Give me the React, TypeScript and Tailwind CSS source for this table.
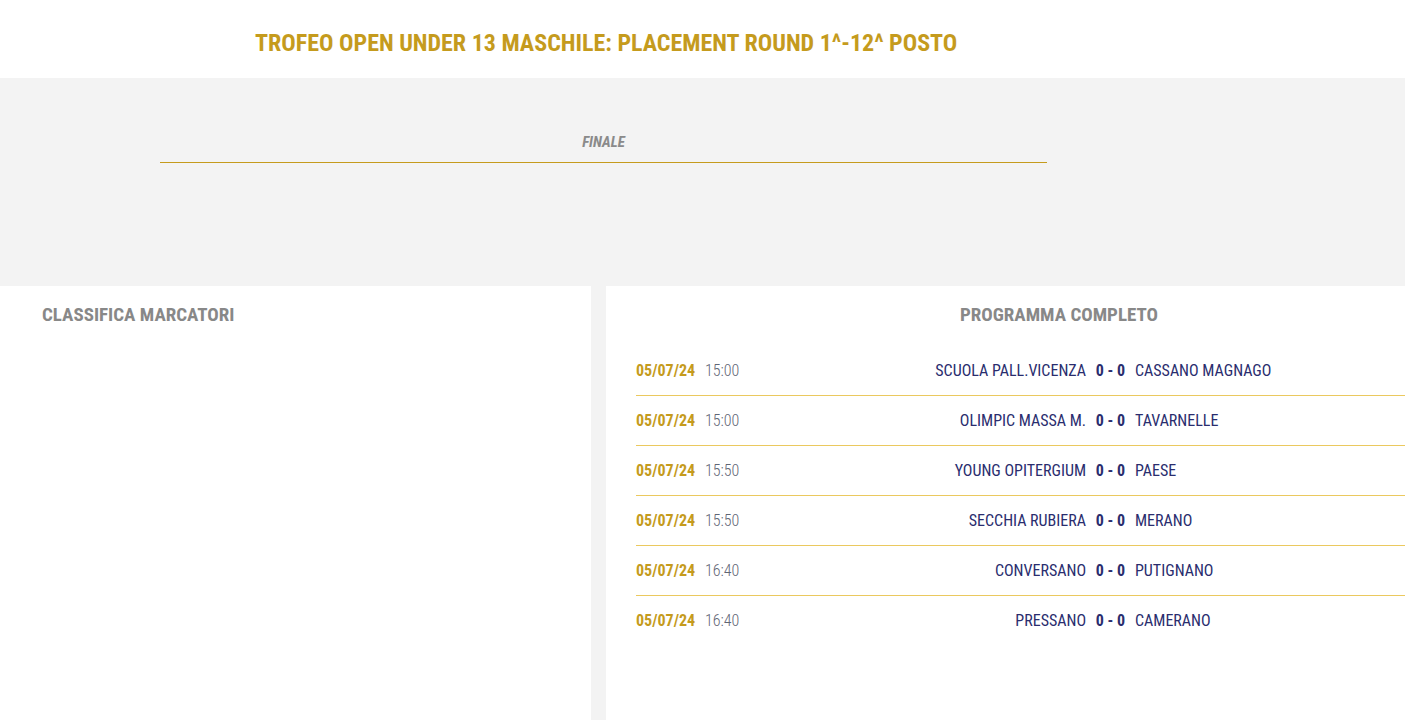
import React from "react";

interface Match {
  date: string;
  time: string;
  home: string;
  away: string;
  score: string;
}

const matches: Match[] = [
  { date: "05/07/24", time: "15:00", home: "SCUOLA PALL.VICENZA", away: "CASSANO MAGNAGO", score: "0 - 0" },
  { date: "05/07/24", time: "15:00", home: "OLIMPIC MASSA M.", away: "TAVARNELLE", score: "0 - 0" },
  { date: "05/07/24", time: "15:50", home: "YOUNG OPITERGIUM", away: "PAESE", score: "0 - 0" },
  { date: "05/07/24", time: "15:50", home: "SECCHIA RUBIERA", away: "MERANO", score: "0 - 0" },
  { date: "05/07/24", time: "16:40", home: "CONVERSANO", away: "PUTIGNANO", score: "0 - 0" },
  { date: "05/07/24", time: "16:40", home: "PRESSANO", away: "CAMERANO", score: "0 - 0" },
];

const font = "font-['Roboto_Condensed','Roboto',sans-serif] font-stretch-condensed";

const App: React.FC = () => {
  return (
    <div className={`min-h-[720px] w-[1405px] overflow-hidden bg-[#f3f3f3] ${font}`}>
      {/* Page title */}
      <div className="h-[78px] bg-white pl-[255px] pt-[27px]">
        <h1 className="text-[24px] font-bold leading-[32px] text-[#c59b1d]">
          TROFEO OPEN UNDER 13 MASCHILE: PLACEMENT ROUND 1^-12^ POSTO
        </h1>
      </div>

      {/* Bracket area */}
      <div className="h-[208px] pl-[160px] pt-[52px]">
        <div className="w-[887px] text-center">
          <span className="text-[15px] font-bold italic leading-[20px] text-[#8a8a8a]">FINALE</span>
        </div>
        <div className="mt-[8px] h-px w-[887px] bg-[#c59b1d]" />
      </div>

      {/* Panels */}
      <div className="flex gap-[15px]">
        <div className="min-h-[434px] w-[591px] shrink-0 bg-white px-[42px] pt-[17px]">
          <h2 className="text-[19px] font-bold leading-[24px] text-[#888888]">CLASSIFICA MARCATORI</h2>
        </div>

        <div className="min-h-[434px] w-[906px] shrink-0 bg-white pl-[30px] pt-[17px]">
          <h2 className="pr-[30px] text-center text-[19px] font-bold leading-[24px] text-[#888888]">
            PROGRAMMA COMPLETO
          </h2>
          <div className="mt-[19px] divide-y divide-[#ebc95f]">
            {matches.map((m, i) => (
              <div key={i} className="flex h-[50px] items-center text-[16px]">
                <span className="w-[69px] font-bold text-[#c59b1d]">{m.date}</span>
                <span className="w-[60px] font-light text-[#5f6675]">{m.time}</span>
                <span className="w-[321px] text-right text-[#2a2d6e]">{m.home}</span>
                <span className="w-[49px] text-center font-bold text-[#2a2d6e]">{m.score}</span>
                <span className="text-[#2a2d6e]">{m.away}</span>
              </div>
            ))}
          </div>
        </div>
      </div>
    </div>
  );
};

export default App;
